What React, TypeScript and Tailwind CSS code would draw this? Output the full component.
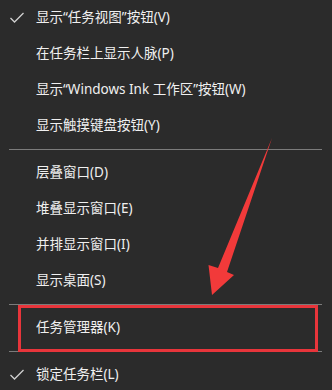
import React from 'react'

type Entry = { label: string; checked?: boolean } | 'sep'

const entries: Entry[] = [
  { label: '显示“任务视图”按钮(V)', checked: true },
  { label: '在任务栏上显示人脉(P)' },
  { label: '显示“Windows Ink 工作区”按钮(W)' },
  { label: '显示触摸键盘按钮(Y)' },
  'sep',
  { label: '层叠窗口(D)' },
  { label: '堆叠显示窗口(E)' },
  { label: '并排显示窗口(I)' },
  { label: '显示桌面(S)' },
  'sep',
  { label: '任务管理器(K)' },
  'sep',
  { label: '锁定任务栏(L)', checked: true },
]

function Check() {
  return (
    <svg width="16" height="12" viewBox="0 0 16 12" className="absolute left-[9px] top-[12px]">
      <polyline points="1.5,6 5.5,10 14.5,1" fill="none" stroke="#d0d0d0" strokeWidth="1.3" />
    </svg>
  )
}

export default function App() {
  return (
    <div
      className="relative w-[332px] h-[390px] overflow-hidden bg-[#2b2b2b] text-[#f0f0f0] text-[13.5px]"
      style={{ fontFamily: '"Noto Sans", "Noto Sans CJK SC", sans-serif' }}
    >
      <div className="flex flex-col">
        {entries.map((e, i) =>
          e === 'sep' ? (
            <div key={i} className="py-[5px] pl-[9px] pr-[10px]">
              <div className="h-px bg-[#7b7b7b]" />
            </div>
          ) : (
            <div key={i} className="relative h-9 flex items-center pl-[36px]">
              {e.checked && <Check />}
              <span className="leading-none">{e.label}</span>
            </div>
          )
        )}
      </div>

      {/* highlight box */}
      <div className="absolute left-[18px] top-[305px] w-[300px] h-[47px] border-[3.5px] border-[#e8353b]" />

      {/* arrow */}
      <svg width="332" height="390" className="absolute left-0 top-0 pointer-events-none">
        <polygon points="272,138 227,272 234,275 212,295 208.5,265 218,268" fill="#f23a3a" />
      </svg>
    </div>
  )
}
